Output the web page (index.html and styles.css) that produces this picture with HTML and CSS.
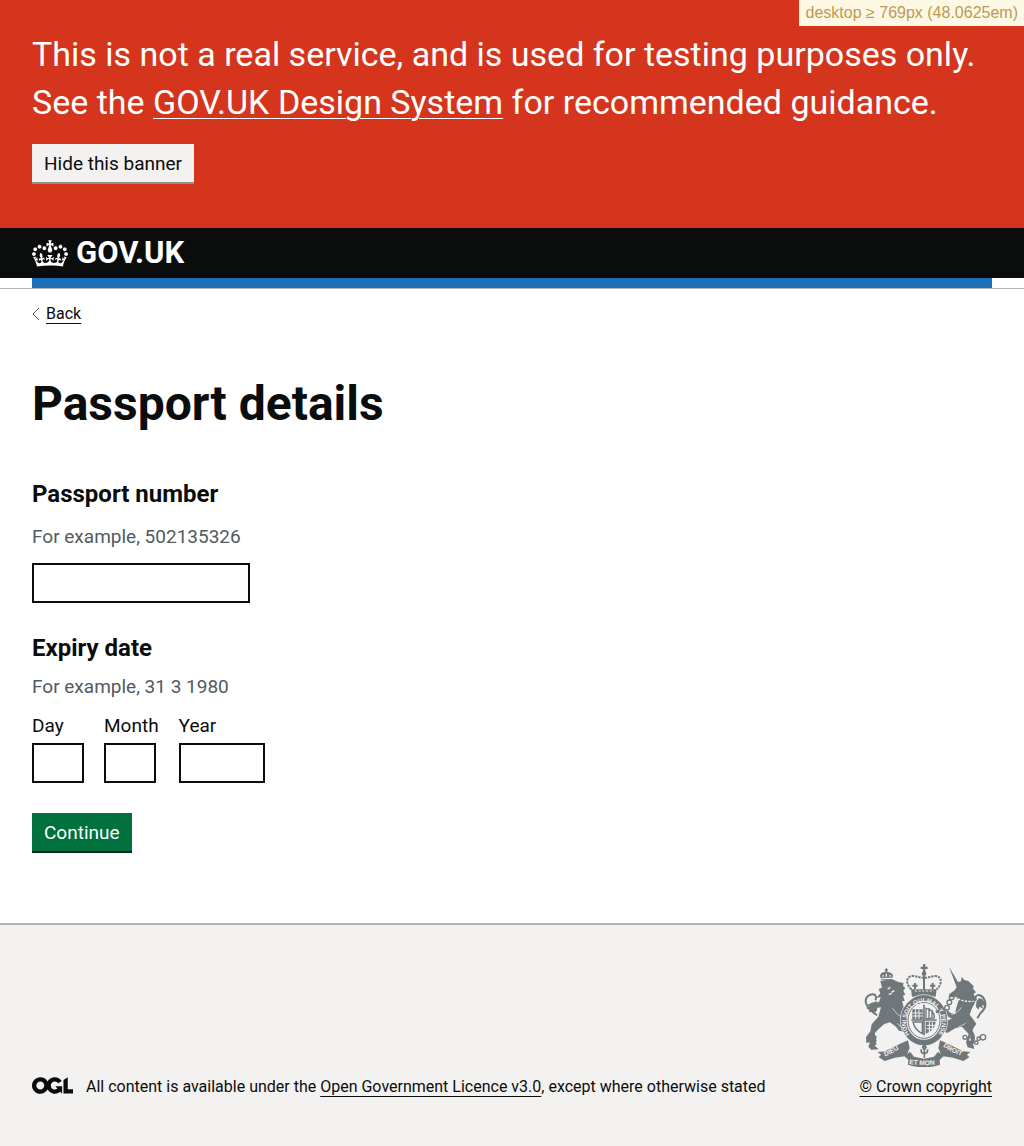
FILE: index.html
```html
<!DOCTYPE html>
<html lang="en">
<head>
<meta charset="utf-8">
<meta name="viewport" content="width=device-width, initial-scale=1">
<title>Passport details - GOV.UK</title>
<link rel="stylesheet" href="styles.css">
</head>
<body>
<div class="breakpoint">desktop ≥ 769px (48.0625em)</div>
<section class="banner">
  <p class="banner-text">This is not a real service, and is used for testing purposes only. See the <a href="#">GOV.UK Design System</a> for recommended guidance.</p>
  <button class="button button-secondary" type="button">Hide this banner</button>
</section>
<header class="header">
  <div class="header-inner">
    <a class="logo" href="#">
      <svg class="crown" viewBox="0 0 132 97" aria-hidden="true"><path fill="currentColor" fill-rule="evenodd" d="M25 30.2c3.5 1.5 7.7-.2 9.1-3.7 1.5-3.6-.2-7.8-3.9-9.2-3.6-1.4-7.6.3-9.1 3.9-1.4 3.5.3 7.5 3.9 9zM9 39.5c3.6 1.5 7.8-.2 9.2-3.7 1.5-3.6-.2-7.8-3.9-9.1-3.6-1.5-7.6.2-9.1 3.8-1.4 3.5.3 7.5 3.8 9zM4.4 57.2c3.5 1.5 7.7-.2 9.1-3.8 1.5-3.6-.2-7.7-3.9-9.1-3.5-1.5-7.6.3-9.1 3.8-1.4 3.5.3 7.6 3.9 9.1zm38.3-21.4c3.5 1.5 7.7-.2 9.1-3.8 1.5-3.6-.2-7.7-3.9-9.1-3.6-1.5-7.6.3-9.1 3.8-1.3 3.6.4 7.7 3.9 9.1zm64.4-5.6c-3.6 1.5-7.8-.2-9.1-3.7-1.5-3.6.2-7.8 3.8-9.2 3.6-1.4 7.7.3 9.2 3.9 1.3 3.5-.4 7.5-3.9 9zm15.9 9.3c-3.6 1.5-7.7-.2-9.1-3.7-1.5-3.6.2-7.8 3.7-9.1 3.6-1.5 7.7.2 9.2 3.8 1.5 3.5-.3 7.5-3.8 9zm4.7 17.7c-3.6 1.5-7.8-.2-9.2-3.8-1.5-3.6.2-7.7 3.9-9.1 3.6-1.5 7.7.3 9.2 3.8 1.3 3.5-.4 7.6-3.9 9.1zM89.3 35.8c-3.6 1.5-7.8-.2-9.2-3.8-1.4-3.6.2-7.7 3.9-9.1 3.6-1.5 7.7.3 9.2 3.8 1.4 3.6-.3 7.7-3.9 9.1zM69.7 17.7l8.9 4.7V9.3l-8.9 2.8c-.2-.3-.5-.6-.9-.9L72.4 0H59.6l3.5 11.2c-.3.3-.6.5-.9.9l-8.8-2.8v13.1l8.8-4.7c.3.3.6.7.9.9l-5 15.4v.1c-.2.8-.4 1.6-.4 2.4 0 4.1 3.1 7.5 7 8.1h.2c.3 0 .7.1 1 .1.4 0 .7 0 1-.1h.2c4-.6 7.1-4.1 7.1-8.1 0-.8-.1-1.7-.4-2.4V34l-5.1-15.4c.4-.2.7-.6 1-.9zM66 92.8c16.9 0 32.8 1.1 47.1 3.2 4-16.9 8.9-26.7 14-33.5l-9.6-3.4c1 4.9 1.1 7.2 0 10.2-1.5-1.4-3-4.3-4.2-8.7L108.6 76c2.8-2 5-3.2 7.5-3.3-4.4 9.4-10 11.9-13.6 11.2-4.3-.8-6.3-4.6-5.6-7.9 1-4.7 5.7-5.9 8-.5 4.3-8.7-3-11.4-7.6-8.8 7.1-7.2 7.9-13.5 2.1-21.1-8 6.1-8.1 12.3-4.5 20.8-4.7-5.4-12.1-2.5-9.5 6.2 3.4-5.2 7.9-2 7.2 3.1-.6 4.3-6.4 7.8-13.5 7.2-10.3-.9-10.9-8-11.2-13.8 2.5-.5 7.1 1.8 11 7.3L80.2 60c-4.1 4.4-8 5.3-12.3 5.4 1.4-4.4 8-11.6 8-11.6H55.5s6.4 7.2 7.9 11.6c-4.2-.1-8-1-12.3-5.4l1.4 16.4c3.9-5.5 8.5-7.7 10.9-7.3-.3 5.8-.9 12.8-11.1 13.8-7.2.6-12.9-2.9-13.5-7.2-.7-5 3.8-8.3 7.1-3.1 2.7-8.7-4.6-11.6-9.4-6.2 3.7-8.5 3.6-14.7-4.6-20.8-5.8 7.6-5 13.9 2.2 21.1-4.7-2.6-11.9.1-7.7 8.8 2.3-5.5 7.1-4.2 8.1.5.7 3.3-1.3 7.1-5.7 7.9-3.5.7-9-1.8-13.5-11.2 2.5.1 4.7 1.3 7.5 3.3l-4.7-15.4c-1.2 4.4-2.7 7.2-4.3 8.7-1.1-3-.9-5.3 0-10.2l-9.5 3.4c5 6.9 9.9 16.7 14 33.5 14.8-2.1 30.8-3.2 47.7-3.2z"/></svg>
      <span>GOV.UK</span>
    </a>
  </div>
</header>
<div class="service-bar"><div class="service-bar-fill"></div></div>
<div class="page">
  <a class="back" href="#"><svg class="chevron" viewBox="0 0 8 12" aria-hidden="true"><path d="M7 0 1 6l6 6" fill="none" stroke="#505a5f"/></svg><span>Back</span></a>
  <main>
    <h1>Passport details</h1>
    <form>
      <div class="field">
        <label class="field-title" for="passport">Passport number</label>
        <p class="hint" id="passport-hint">For example, 502135326</p>
        <input class="input width-10" id="passport" type="text" aria-describedby="passport-hint">
      </div>
      <fieldset class="date-group">
        <legend class="field-title">Expiry date</legend>
        <p class="hint date-hint">For example, 31 3 1980</p>
        <div class="date">
          <div class="date-item"><label for="day">Day</label><input class="input width-2" id="day" type="text" inputmode="numeric"></div>
          <div class="date-item"><label for="month">Month</label><input class="input width-2" id="month" type="text" inputmode="numeric"></div>
          <div class="date-item"><label for="year">Year</label><input class="input width-4" id="year" type="text" inputmode="numeric"></div>
        </div>
      </fieldset>
      <button class="button button-primary" type="button">Continue</button>
    </form>
  </main>
</div>
<footer class="footer">
  <div class="footer-inner">
    <div class="licence">
      <svg class="ogl" viewBox="0 0 483.2 195.7" role="img" aria-label="Open Government Licence"><path fill="currentColor" d="M421.5 142.8V.1l-50.7 32.3v161.1h112.4v-50.7zm-122.3-9.6A47.12 47.12 0 0 1 221 97.8c0-26 21.1-47.1 47.1-47.1 16.7 0 31.4 8.7 39.7 21.8l42.7-27.2A97.63 97.63 0 0 0 268.1 0c-36.5 0-68.3 20.1-85.1 49.7A98 98 0 0 0 97.8 0C43.9 0 0 43.9 0 97.8s43.9 97.8 97.8 97.8c36.5 0 68.3-20.1 85.1-49.7a97.76 97.76 0 0 0 149.6 25.4l19.4 22.2h3v-87.8h-80l24.3 27.5zM97.8 145c-26 0-47.1-21.1-47.1-47.1s21.1-47.1 47.1-47.1 47.1 21.1 47.1 47.1S123.8 145 97.8 145"/></svg>
      <p>All content is available under the <a href="#">Open Government Licence v3.0</a>, except where otherwise stated</p>
    </div>
    <a class="copyright" href="#">
      <svg class="arms" viewBox="27 27 375 309" aria-hidden="true">
        <defs>
          <path id="motto-left" d="M93 304Q127 291 160 264"/>
          <path id="motto-mid" d="M165 327Q210 334 258 327"/>
          <path id="motto-right" d="M267 274Q294 296 340 308"/>
          <path id="garter-arc" d="M167 238A54 60 0 1 1 253 238"/>
        </defs>
        <g fill="#6f777b" stroke="none">
          <!-- lion -->
          <path d="M82 76l-4-14q3-12 17-11l-3-7 5-5 5 5-3 7q15 1 18 10l-4 15z"/>
          <path d="M79 78l36-5 18 8 16 3-2 9 7 6-6 8 6 12-7 3 5 15-8 2 5 16 7 12-7 12 6 17-13 10 6 12 12 4-3 10-22-5-9-12-18-13-17 5-17 15-12 13 6 23-7 13 13 12-22 1-9-9 5-13-11 2-1-17 13-18 4-21 20-23 8-28-20 3-13-8 15-3 13-10 4-13-13 3 12-14-5-13 10-4z"/>
          <path d="M70 139l-17 4-14 8 8 2-10 9 12-1-5 11 13-3 2 8 10-11 1-9z"/>
          <!-- unicorn -->
          <path d="M285 35l27 46 9-2 2-14 8 10 12 3 16 16-2 7 9 11-7 4 6 16-3 13-9 17-6 17 10 13 10 15-8 11-8 20-6 18 12 10 4 16-20-5-5-15 8-25-20-22-19 4-25 15-14-7 8-11-3-17 23-8-16-8-17-12-14 4-3-8 17-6 17 4 12 9 13 3 4-19 8-25-14-7-12 1-4-9 17-12 6-9z"/>
          <path d="M367 140l8-11 10 4 10 12-2 9-9-4 3 11-11-6-2 9-8-8z"/>
          <!-- scroll -->
          <path d="M71 291l22-2 50-25 19-8 5 23-10 24-34 5-31 10-18-11 7-8z"/>
          <path d="M349 291l-22-2-50-25-19-8-5 23 10 24 34 5 31 10 18-11-7-8z"/>
          <path d="M151 303l17-13 12 15 30 6 30-6 12-15 17 13-12 12 1 14q-48 16-96 0l1-14z"/>
          <!-- royal crown -->
          <path d="M171 103h77l-3 22h-71z"/>
          <path d="M207 27h7v8h7v7h-7v12h-7V42h-7v-7h7z"/>
          <circle cx="210" cy="56" r="7"/>
        </g>
        <g fill="none" stroke="#6f777b">
          <path d="M64 136c8-20-10-23-23-12-11 10-6 29 10 43l18 14M366 137c-7-22 14-20 23-7 10 17 4 33-10 45l-9 15" stroke-width="6"/>
          <path d="M64 242c-7 11-8 19-1 29M350 230c8 11 9 22 3 35" stroke-width="12"/>
          <path d="M172 103c-20-19-14-40 4-40 14 0 22 8 34 4 12 4 20-4 34-4 18 0 24 21 4 40" stroke-width="6" stroke-dasharray="7 3"/>
          <path d="M210 63v43M183 84v18m-8-10h16M236 84v18m-8-10h16" stroke-width="6"/>
          <path d="M183 108h56" stroke="#f3f2f1" stroke-width="3" stroke-dasharray="6 5"/>
          <ellipse cx="210" cy="196" rx="61" ry="67" stroke-width="17"/>
          <ellipse cx="210" cy="196" rx="71" ry="77" stroke="#f3f2f1" stroke-width="2"/>
          <ellipse cx="210" cy="196" rx="48" ry="54" stroke-width="3"/>
          <path d="M210 149v92M172 195h76" stroke-width="5"/>
          <path d="M176 164h29v28h-29zM216 201h28q-4 25-28 34z" fill="#6f777b" stroke-width="2"/>
          <path d="M216 160q26 5 25 29l-25 2zM225 159v30M234 164v24M205 201h-28q5 24 28 35z" stroke-width="4"/>
          <path d="M176 174h29m-29 9h29m-20-19v28m10-28v28M218 211h24m-24 10h19m-11-20v31m9-31v22" stroke="#f3f2f1" stroke-width="3"/>
          <path d="M211 277v31M201 283q0 13 10 13t10-13M211 268l-5 9 5 8 5-8z" stroke-width="5"/>
          <path d="M302 126q25 16 57 13" stroke="#f3f2f1" stroke-width="4" stroke-dasharray="7 4"/>
          <path d="M82 71l34-1M101 103l8-6m3 15 9-5M104 118l9-2" stroke="#f3f2f1" stroke-width="4"/>
          <path d="M87 65v-5m10 5v-9m11 9v-5" stroke="#f3f2f1" stroke-width="4"/>
          <path d="M130 205q10 14 22 15M116 160q12 19 25 25M322 157q-14 22-31 21M312 217l23-12" stroke="#f3f2f1" stroke-width="2"/>
          <g stroke-width="4">
            <circle cx="293" cy="127" r="7"/><circle cx="286" cy="142" r="7"/><circle cx="279" cy="158" r="7"/><circle cx="333" cy="247" r="6"/><circle cx="348" cy="254" r="7"/><circle cx="367" cy="263" r="5"/><circle cx="387" cy="247" r="8"/><circle cx="374" cy="251" r="5"/>
          </g>
        </g>
        <g class="motto">
          <text><textPath href="#motto-left">DIEU</textPath></text>
          <text><textPath href="#motto-mid">ET MON</textPath></text>
          <text><textPath href="#motto-right">DROIT</textPath></text>
          <text class="garter"><textPath href="#garter-arc">HONI SOIT QUI MAL Y PENSE</textPath></text>
        </g>
      </svg>
      <span>© Crown copyright</span>
    </a>
  </div>
</footer>
</body>
</html>
```
FILE: styles.css
```css
* { box-sizing: border-box; }
body {
  margin: 0;
  min-height: 100vh;
  display: flex;
  flex-direction: column;
  background: #fff;
  color: #0b0c0c;
  font: 19px/24px Roboto, Arial, sans-serif;
}
p { margin: 0; }
a { color: inherit; text-decoration-thickness: 1px; text-underline-offset: 4px; }
.breakpoint {
  position: absolute;
  top: 0;
  right: 0;
  padding: 3px 6px;
  border-left: 1px solid #fbeed5;
  background: #fcf8e3;
  color: #c09853;
  font: 16px/20px "Liberation Sans", Arial, sans-serif;
}
.banner { padding: 30px 32px 44px; background: #d4351c; color: #fff; }
.banner-text { margin-bottom: 18px; font-size: 34px; line-height: 48px; }
.button {
  display: block;
  height: 38px;
  margin: 0 0 2px;
  padding: 2px 12px 0;
  border: 0;
  font: inherit;
}
.button-secondary { background: #f3f2f1; color: #0b0c0c; box-shadow: 0 2px 0 #929191; }
.button-primary { background: #00703c; color: #fff; box-shadow: 0 2px 0 #002d18; }
.header { padding: 0 32px; background: #0b0c0c; color: #fff; }
.header-inner { display: flex; align-items: center; height: 50px; }
.logo { display: flex; align-items: center; gap: 8px; text-decoration: none; font-size: 31px; font-weight: 700; line-height: 30px; }
.crown { width: 36px; height: 27px; }
.service-bar { padding: 0 32px; border-bottom: 1px solid #b1b4b6; }
.service-bar-fill { height: 10px; background: #1d70b8; }
.page { flex: 1; padding: 13px 32px 70px; }
.back { display: inline-flex; align-items: center; gap: 6px; font-size: 16px; line-height: 20px; text-decoration: none; }
.back span { text-decoration: underline 1px; text-underline-offset: 4px; }
.chevron { width: 8px; height: 12px; }
h1 { margin: 53px 0 50px; font-size: 48px; line-height: 50px; font-weight: 700; }
.field { display: flex; flex-direction: column; align-items: flex-start; }
.field-title { padding: 0; font-size: 24px; line-height: 30px; font-weight: 700; }
.hint { margin: 16px 0 14px; color: #505a5f; }
.input {
  display: block;
  height: 40px;
  padding: 5px;
  border: 2px solid #0b0c0c;
  border-radius: 0;
  background: #fff;
  font: inherit;
}
.width-10 { width: 218px; }
.width-4 { width: 86px; }
.width-2 { width: 52px; }
.date-group { margin: 30px 0; padding: 0; border: 0; }
.date-hint { margin: 12px 0 15px; }
.date { display: flex; gap: 20px; }
.date-item label { display: block; margin-bottom: 5px; }
.footer { padding: 39px 32px 50px; border-top: 2px solid #b1b4b6; background: #f3f2f1; font-size: 16px; line-height: 20px; }
.footer-inner { display: flex; align-items: flex-end; justify-content: space-between; }
.licence { display: flex; align-items: flex-start; gap: 13px; }
.ogl { width: 41px; height: 17px; }
.copyright { display: flex; flex-direction: column; align-items: center; gap: 10px; }
.arms { width: 125px; height: 103px; }
.motto text { fill: #f3f2f1; font: 700 20px "Liberation Sans", Arial, sans-serif; }
.motto .garter { font-size: 18px; }
```
